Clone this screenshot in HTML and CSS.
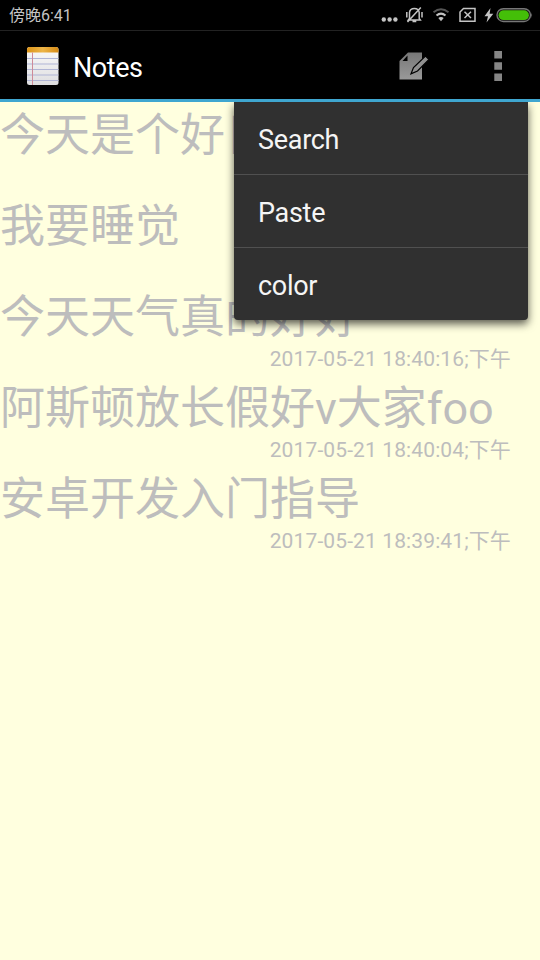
FILE: index.html
```
<!DOCTYPE html>
<html lang="zh-CN">
<head>
<meta charset="utf-8">
<title>Notes</title>
<link rel="stylesheet" href="styles.css">
</head>
<body>
<div class="screen">
  <header class="status">
    <span class="clock">傍晚6:41</span>
    <svg class="status-icons" width="160" height="30" viewBox="380 0 160 30" aria-hidden="true">
      <g fill="#c4c4c4"><circle cx="383.800" cy="19.500" r="2.200"/><circle cx="389.600" cy="19.500" r="2.200"/><circle cx="395.400" cy="19.500" r="2.200"/></g>
      <g fill="none" stroke="#c4c4c4" stroke-width="1.5">
        <path d="M409.500 18.500V12.500Q410 8.500 414.300 8.500Q418.800 8.500 419.200 12.500V18.500L420.300 20H408.300ZM412.500 21.500H416.300M406.800 12V17.500M422 12V17.500M407.500 22L420.800 7.500"/>
        <path d="M436.500 15.500Q441 11.700 445.500 15.500" stroke-width="2"/>
        <path d="M433.500 12.300Q441 6.300 448.500 12.300" stroke="#555" stroke-width="2"/>
        <path d="M463.500 8.500H475V21.200H460V12ZM464.500 11.800L471 18M471 11.800L464.500 18"/>
      </g>
      <path d="M438.300 18Q441 16 443.700 18L441 21.200Z" fill="#c4c4c4"/>
      <path d="M490.500 8L484.500 16.200H488L486.500 22.500L493.300 13.700H489.600Z" fill="#c4c4c4"/>
      <rect x="497" y="8.700" width="33.500" height="12.800" rx="6.400" fill="#111" stroke="#777" stroke-width="1.400"/>
      <rect x="498.600" y="10.300" width="30.300" height="9.800" rx="4.900" fill="#44bf08"/>
      <path d="M531.300 12.500Q533 15 531.300 18Z" fill="#777"/>
    </svg>
  </header>
  <div class="bar">
    <svg class="logo" width="34" height="40" viewBox="0 0 34 40" aria-hidden="true">
      <defs>
        <linearGradient id="paper" x2="0" y2="1"><stop stop-color="#fafafa"/><stop offset="1" stop-color="#dedee0"/></linearGradient>
        <linearGradient id="binding" x2="1" y2="0"><stop stop-color="#dc9417"/><stop offset=".5" stop-color="#edb548"/><stop offset="1" stop-color="#d68b16"/></linearGradient>
      </defs>
      <rect x="1" y="1" width="31.500" height="38" rx="2.500" fill="url(#paper)"/>
      <path d="M1 6.500V3.500Q1 1 3.500 1H30Q32.500 1 32.500 3.500V6.500Z" fill="url(#binding)"/>
      <path d="M1 12.500H32.500M1 18H32.500M1 23.500H32.500M1 29H32.500M1 34.500H32.500" stroke="#b0b5d5"/>
      <path d="M6.500 6.500V39" stroke="#ce8b98"/>
    </svg>
    <h1 class="title">Notes</h1>
    <svg class="actions" width="150" height="68" viewBox="390 31 150 68" aria-hidden="true">
      <defs><linearGradient id="metal" x2="0" y2="1"><stop stop-color="#777"/><stop offset="1" stop-color="#999"/></linearGradient></defs>
      <path d="M408 52.500H422V79.500H399.500V61Z" fill="url(#metal)"/>
      <path d="M407.500 55.500V61H402.500Z" fill="#000"/>
      <path d="M425.500 56L429 59.500L417.500 71L411 73.800L413.500 67.500Z" fill="#909090" stroke="#000" stroke-width="1.200"/>
      <path d="M494.300 51H502V58.500H494.300ZM494.300 62.200H502V69.700H494.300ZM494.300 73.400H502V80.900H494.300Z" fill="#858585"/>
    </svg>
  </div>
  <main class="notes">
    <article class="note"><h2>今天是个好日</h2></article>
    <article class="note"><h2>我要睡觉</h2></article>
    <article class="note"><h2>今天天气真的好好</h2><time>2017-05-21 18:40:16;下午</time></article>
    <article class="note"><h2>阿斯顿放长假好v大家foo</h2><time>2017-05-21 18:40:04;下午</time></article>
    <article class="note"><h2>安卓开发入门指导</h2><time>2017-05-21 18:39:41;下午</time></article>
    <nav class="menu">
      <div class="item">Search</div>
      <div class="item">Paste</div>
      <div class="item">color</div>
    </nav>
  </main>
</div>
</body>
</html>
```
FILE: styles.css
```
* { box-sizing: border-box; }
body { margin: 0; font-family: Roboto, "Noto Sans CJK SC", sans-serif; }
h1, h2 { margin: 0; font-weight: 400; }
.screen { width: 540px; height: 960px; display: flex; flex-direction: column; overflow: hidden; background: #ffffdf; }
.status { height: 31px; flex: none; display: flex; justify-content: space-between; background: #000; border-bottom: 1px solid #222; }
.clock { padding-left: 9px; font-size: 16px; line-height: 32px; color: #c4c4c4; }
.bar { height: 71px; flex: none; display: flex; align-items: center; background: #000; border-bottom: 3px solid #3fa6d0; }
.logo { margin: 2px 0 0 26px; }
.title { margin-left: 13px; padding-top: 6px; font-size: 27px; line-height: 32px; letter-spacing: -.45px; color: #fff; }
.actions { margin-left: auto; }
.notes { position: relative; flex: 1; }
.note { height: 91px; display: flex; flex-direction: column; color: #bdbdbd; }
.note h2 { height: 60px; padding-top: 4px; font-size: 45px; line-height: 60px; white-space: nowrap; }
.note time { padding-right: 29px; text-align: right; font-size: 21px; line-height: 31px; letter-spacing: .12px; }
.menu { position: absolute; top: 0; right: 12px; width: 294px; height: 218px; background: #303030; border-radius: 0 0 4px 4px; box-shadow: 0 4px 9px rgba(0, 0, 0, .65); clip-path: inset(0 -20px -20px -20px); }
.item { height: 73px; padding-left: 24px; font-size: 27px; line-height: 77px; letter-spacing: -.3px; color: #f5f5f5; }
.item:first-child { height: 72px; line-height: 76px; }
.item + .item { border-top: 1px solid #505050; }
```
